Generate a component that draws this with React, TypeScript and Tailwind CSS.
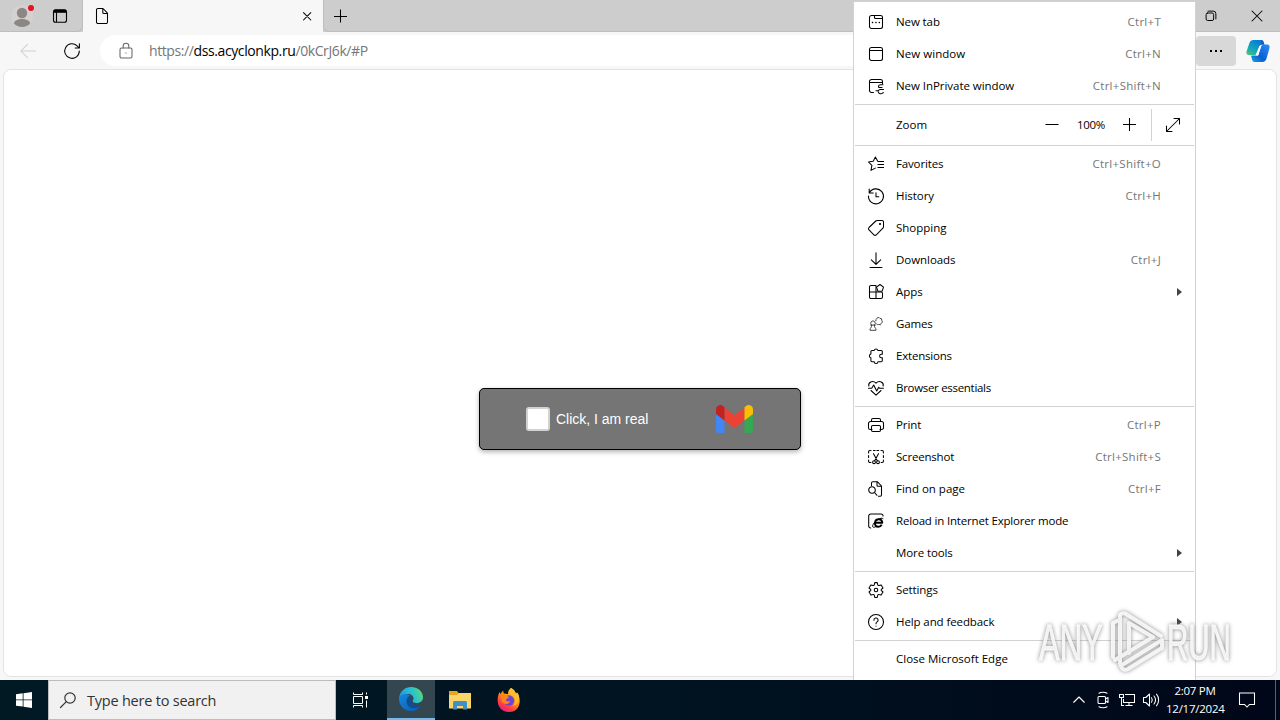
import React from 'react';

type MenuRow = {
  label: string;
  keys?: string;
  icon?: React.ReactNode;
  arrow?: boolean;
  tracking?: string;
};

function Icon({ children, className = 'w-4 h-4' }: { children: React.ReactNode; className?: string }) {
  return (
    <svg
      viewBox="0 0 16 16"
      className={`shrink-0 overflow-visible ${className}`}
      fill="none"
      stroke="currentColor"
      strokeWidth="1.05"
      strokeLinecap="round"
      strokeLinejoin="round"
    >
      {children}
    </svg>
  );
}

const windowRows: MenuRow[] = [
  {
    label: 'New tab',
    keys: 'Ctrl+T',
    tracking: 'tracking-[-0.1px]',
    icon: (
      <Icon>
        <rect x="1.5" y="1.5" width="13" height="13" rx="2" />
        <path d="M6.5 1.5v2a1 1 0 0 0 1 1h7" />
        <path d="M4.5 8.5h.1M7.9 8.5h.1M11.3 8.5h.1" strokeWidth="1.5" />
      </Icon>
    ),
  },
  {
    label: 'New window',
    keys: 'Ctrl+N',
    tracking: 'tracking-[0.05px]',
    icon: (
      <Icon>
        <rect x="1.5" y="1.5" width="13" height="13" rx="2" />
        <path d="M1.5 4.5h13" />
      </Icon>
    ),
  },
  {
    label: 'New InPrivate window',
    keys: 'Ctrl+Shift+N',
    tracking: 'tracking-[-0.05px]',
    icon: (
      <Icon>
        <path d="M5.5 14.5h-2a2 2 0 0 1-2-2v-9a2 2 0 0 1 2-2h9a2 2 0 0 1 2 2v2M1.5 4.5h13" />
        <path d="M15 6.8h-2.5a2 2 0 0 0-2 2M10.8 9.5H14M15.500 11.500h-3.300a1.800 1.800 0 0 0-1.800 1.300H8M10.200 13.800a2.600 2.600 0 0 0 4.600.900h.700" />
      </Icon>
    ),
  },
];

const browseRows: MenuRow[] = [
  {
    label: 'Favorites',
    keys: 'Ctrl+Shift+O',
    tracking: 'tracking-[-0.15px]',
    icon: (
      <Icon>
        <path d="M9.700 5.300 7.400 1 5.200 5.300.5 6l3.400 3.400-.9 5 4.300-2.300" />
        <path d="M10 5.500h6M9.500 8.500H16M9.500 11.500H16" strokeLinecap="butt" />
      </Icon>
    ),
  },
  {
    label: 'History',
    keys: 'Ctrl+H',
    tracking: 'tracking-[-0.05px]',
    icon: (
      <Icon>
        <path d="M1.200 1v4h4M1.500 4.600A7.500 7.500 0 1 1 .5 8M8 4.700v4h2.800" />
      </Icon>
    ),
  },
  {
    label: 'Shopping',
    tracking: 'tracking-[0px]',
    icon: (
      <Icon>
        <path d="M9.200.5h4.700a1.600 1.600 0 0 1 1.600 1.600v4.700a2 2 0 0 1-.6 1.400l-6.600 6.600a1.700 1.700 0 0 1-2.400 0L1 9.900a1.700 1.700 0 0 1 0-2.400L7.800 1A2 2 0 0 1 9.200.5Z" />
        <circle cx="12" cy="4" r=".5" fill="currentColor" />
      </Icon>
    ),
  },
  {
    label: 'Downloads',
    keys: 'Ctrl+J',
    tracking: 'tracking-[-0.05px]',
    icon: (
      <Icon>
        <path d="M8 .8v11.400M3.300 7.800 8 12.400l4.700-4.600M2 15.500h12" />
      </Icon>
    ),
  },
  {
    label: 'Apps',
    arrow: true,
    tracking: 'tracking-[0px]',
    icon: (
      <Icon>
        <path d="M8 14.500H3A1.500 1.500 0 0 1 1.500 13V3A1.500 1.500 0 0 1 3 1.500h5v13ZM1.500 8H13a1.500 1.500 0 0 1 1.500 1.500V13a1.500 1.500 0 0 1-1.500 1.500H8" />
        <path d="m12 .5 3.500 2.700-1.300 4H9.900L8.500 3.200Z" fill="white" />
      </Icon>
    ),
  },
  {
    label: 'Games',
    tracking: 'tracking-[-0.15px]',
    icon: (
      <Icon>
        <g strokeWidth="0.9" stroke="#333">
          <path d="M3.500 9a2.300 2.300 0 1 1 3 0M2.700 9.100h4.600M3.600 9.300c0 1.800-.6 2.700-1.600 3.500v1.500h6v-1.500c-1-.8-1.600-1.700-1.600-3.500" />
          <path d="M7.800 4.900a1.700 1.700 0 0 1 1-2.200 1.600 1.600 0 0 1 3-.4 1.900 1.900 0 0 1 2 2.200 1.700 1.700 0 0 1-.5 2.700 1.900 1.900 0 0 1-2.700 1.300A1.700 1.700 0 0 1 8.500 8" />
        </g>
      </Icon>
    ),
  },
  {
    label: 'Extensions',
    tracking: 'tracking-[-0.2px]',
    icon: (
      <Icon>
        <path d="M4 2.500h2.200a1.900 1.900 0 0 1 3.700 0h3.300a1.100 1.100 0 0 1 1.100 1.100v2.600h-.9a1.800 1.800 0 0 0 0 3.600h.9v2.800a1.100 1.100 0 0 1-1.100 1.100H10a1.900 1.900 0 0 1-3.800 0H4a1.100 1.100 0 0 1-1.100-1.100V9.800a1.900 1.900 0 0 1 0-3.700V3.600A1.100 1.100 0 0 1 4 2.500Z" />
      </Icon>
    ),
  },
  {
    label: 'Browser essentials',
    tracking: 'tracking-[-0.3px]',
    icon: (
      <Icon>
        <path d="M.9 6C-.2 2.500 4.500-.3 8 3.100c3.500-3.400 8.200-.6 7.100 2.900M3 10.500l5 4.700 5-4.700" />
        <path d="M.5 8.300h3.200l2-3.300 3 6 2-3.800.8 1.100h4" />
      </Icon>
    ),
  },
];

const pageRows: MenuRow[] = [
  {
    label: 'Print',
    keys: 'Ctrl+P',
    tracking: 'tracking-[-0.05px]',
    icon: (
      <Icon>
        <path d="M4 12.500H2.300A1.800 1.800 0 0 1 .5 10.700V6.500A2 2 0 0 1 2.500 4.500h11a2 2 0 0 1 2 2v4.200a1.800 1.800 0 0 1-1.800 1.800H12M3.500 4.500V3A1.500 1.500 0 0 1 5 1.500h6A1.500 1.500 0 0 1 12.500 3v1.500" />
        <rect x="3.500" y="8.500" width="9" height="6" rx="1.200" />
      </Icon>
    ),
  },
  {
    label: 'Screenshot',
    keys: 'Ctrl+Shift+S',
    tracking: 'tracking-[-0.2px]',
    icon: (
      <Icon>
        <path d="M.6 4V2.800a1.300 1.300 0 0 1 1.300-1.300H3M5.500 1.500h1.700M9 1.500h1.700M13 1.500h1.100a1.300 1.300 0 0 1 1.300 1.300V4M.6 6.500v2M15.400 6.500v2M.6 11v1.200a1.300 1.300 0 0 0 1.300 1.300h1M15.400 11v1.200a1.300 1.300 0 0 1-1.300 1.300h-1" />
        <path d="m5.500 4.800 3.800 7M10.500 4.800l-3.800 7" />
        <circle cx="6" cy="13.200" r="1.400" />
        <circle cx="10" cy="13.200" r="1.400" />
      </Icon>
    ),
  },
  {
    label: 'Find on page',
    keys: 'Ctrl+F',
    tracking: 'tracking-[0px]',
    icon: (
      <Icon>
        <path d="M3.500 4.500V2A1.300 1.300 0 0 1 4.800.7h4.500l4.200 4.300v9a1.300 1.300 0 0 1-1.300 1.300H10.500M9 .8v3.400a1 1 0 0 0 1 1h3.400" />
        <circle cx="4" cy="9" r="3.300" />
        <path d="m6.500 11.500 2.500 2.800" />
      </Icon>
    ),
  },
  {
    label: 'Reload in Internet Explorer mode',
    tracking: 'tracking-[-0.18px]',
    icon: (
      <Icon>
        <path d="M2.700 15a2 2 0 0 1-2-2V3a2 2 0 0 1 2-2h10.600a2 2 0 0 1 1.800 2" />
        <path d="M13.700 11.600c-.7 1.400-1.900 2.100-3.400 2.100-2.400 0-3.600-1.700-3.300-4h7.300c0-2.300-1.300-3.500-3.600-3.500-1.900 0-3.200 1-3.700 2.700" strokeWidth="1.900" strokeLinecap="butt" />
        <path d="M15 5.500c-1.800-1.500-8 1.700-10 6.200-1.200 2.800.5 3.200 2.700 2" strokeWidth="1" />
      </Icon>
    ),
  },
  { label: 'More tools', arrow: true, tracking: 'tracking-[-0.1px]' },
];

const settingsRows: MenuRow[] = [
  {
    label: 'Settings',
    tracking: 'tracking-[-0.1px]',
    icon: (
      <Icon>
        <path d="M6.800.600 6.300 2.700a1 1 0 0 1-1.300.8l-2.100-.6L1 6l1.600 1.400a.8.800 0 0 1 0 1.200L1 10l1.900 3.100 2.100-.6a1 1 0 0 1 1.300.8l.5 2.100h2.400l.5-2.100a1 1 0 0 1 1.300-.8l2.100.6L15 10l-1.600-1.400a.8.800 0 0 1 0-1.200L15 6l-1.900-3.100-2.100.6a1 1 0 0 1-1.300-.8L9.200.600Z" />
        <circle cx="8" cy="8" r="1.800" />
      </Icon>
    ),
  },
  {
    label: 'Help and feedback',
    arrow: true,
    tracking: 'tracking-[-0.1px]',
    icon: (
      <Icon>
        <circle cx="8" cy="8" r="7.500" />
        <path d="M5.900 6.200a2.100 2.100 0 1 1 3.200 1.700C8.300 8.400 8 8.800 8 9.700M8 12v.1" />
      </Icon>
    ),
  },
];

function Row({ row }: { row: MenuRow }) {
  return (
    <div className="flex h-8 items-center pl-[14px] pr-[13px]">
      <span className="flex w-4 shrink-0">{row.icon}</span>
      <span className={`ml-3 flex-1 whitespace-nowrap text-black ${row.tracking ?? 'tracking-[0px]'}`}>{row.label}</span>
      {row.keys && <span className="mr-[21px] tracking-[0.27px] text-[#767676]">{row.keys}</span>}
      {row.arrow && (
        <svg viewBox="0 0 5 8" className="h-2 w-[5px]" fill="#444">
          <path d="M0 0 5 4 0 8Z" />
        </svg>
      )}
    </div>
  );
}

function Rows({ rows }: { rows: MenuRow[] }) {
  return (
    <>
      {rows.map((row) => (
        <Row key={row.label} row={row} />
      ))}
    </>
  );
}

function Separator({ className = 'mt-[2px] mb-[2px]' }: { className?: string }) {
  return <div className={`mx-px h-px shrink-0 bg-[#d2d2d2] ${className}`} />;
}

function EdgeMenu() {
  return (
    <div className="absolute left-[853px] top-px flex h-[679px] w-[343px] flex-col border border-b-0 border-[#d2d2d2] bg-white pt-1 text-[11.5px]">
      <Rows rows={windowRows} />
      <Separator className="mt-[2px] mb-1" />
      <div className="flex h-8 shrink-0 items-center pl-[42px] text-black">
        <span className="flex-1">Zoom</span>
        <Icon className="mr-[17px] h-4 w-4">
          <path d="M1.500 7.500h13" strokeLinecap="butt" />
        </Icon>
        <span className="mr-[17px] w-7 whitespace-nowrap text-center tracking-[-0.3px]">100%</span>
        <Icon className="mr-[13px] h-4 w-4">
          <path d="M1 7.500h13M7.500 1v13" strokeLinecap="butt" />
        </Icon>
        <span className="h-8 w-px bg-[#d2d2d2]" />
        <Icon className="ml-[13px] mr-[14px] h-4 w-4">
          <path d="M9 1.500h5.500V7M14.500 1.500l-13 13M1.500 9v5.500H7" />
        </Icon>
      </div>
      <Separator className="mt-1 mb-[2px]" />
      <Rows rows={browseRows} />
      <Separator />
      <Rows rows={pageRows} />
      <Separator />
      <Rows rows={settingsRows} />
      <Separator />
      <Row row={{ label: 'Close Microsoft Edge' }} />
    </div>
  );
}

function CopilotLogo() {
  return (
    <svg viewBox="0 0 24 24" className="h-6 w-6">
      <defs>
        <linearGradient id="copA" x1="0" y1="1" x2="0.6" y2="0">
          <stop offset="0" stopColor="#53c66e" />
          <stop offset="0.45" stopColor="#16a8b8" />
          <stop offset="1" stopColor="#087fd5" />
        </linearGradient>
        <linearGradient id="copB" x1="0" y1="1" x2="1" y2="0">
          <stop offset="0" stopColor="#1aa5dd" />
          <stop offset="0.4" stopColor="#0b5fd0" />
          <stop offset="1" stopColor="#2c8cff" />
        </linearGradient>
      </defs>
      <path d="M11.500 1h4c1.400 0 1.800.8 2.200 2l.8 2.700h-3.500L11 9Z" fill="#1557bd" />
      <path d="M7.500 1h6c1.400 0 2 .8 1.600 2.200L11.500 14c-.6 1.500-1.600 2-2.900 2H3C.8 16 0 14.500.5 12.500l3-8.800C4.200 1.800 5.500 1 7.500 1Z" fill="url(#copA)" />
      <path d="M16.500 23h-8c-1.400 0-1.900-.8-2.300-2L5 16.500h5.300c1.200 0 1.700.5 2.200-1.100l2.800-8.100c.5-1.300 1.200-1.800 2.600-1.800H21c2.200 0 3 1.500 2.500 3.600l-3 10.400c-.6 2.300-2 3.500-4 3.500Z" fill="url(#copB)" />
      <path d="M15.200 6.800h-1.700l-4 9.500 2.600.200Z" fill="white" />
    </svg>
  );
}

function GmailLogo() {
  return (
    <svg viewBox="0 0 37 28" className="h-7 w-[37px]">
      <path d="M0 9 8.500 15.500V28H2.500A2.500 2.500 0 0 1 0 25.500Z" fill="#4285f4" />
      <path d="M28.500 15.500 37 9v16.500a2.500 2.500 0 0 1-2.500 2.500h-6Z" fill="#34a853" />
      <path d="M8.500 2.300 18.500 10.500 28.500 2.300v13.200l-10 7.500-10-7.500Z" fill="#ea4335" />
      <path d="M0 4.200C0 .7 4-1.200 6.700.8L8.500 2.300v13.200L0 9Z" fill="#c5221f" />
      <path d="M37 4.200c0-3.500-4-5.400-6.700-3.400l-1.800 1.500v13.200L37 9Z" fill="#fbbc04" />
    </svg>
  );
}

function TabStrip() {
  return (
    <div className="flex h-8 shrink-0 bg-[#cdcdcd]">
      <div className="flex w-[83px] items-center rounded-br-md border-b border-r border-[#bdbdbd] pl-3">
        <svg viewBox="0 0 24 24" className="h-6 w-6">
          <circle cx="10" cy="12" r="11" fill="#d4d1cf" />
          <circle cx="10" cy="9" r="5.2" fill="#8b8785" />
          <path d="M2 19.500c0-6 16-6 16 0-3.500 4.500-12.500 4.500-16 0Z" fill="#8b8785" />
          <circle cx="19" cy="4" r="3" fill="#e81123" />
        </svg>
        <svg viewBox="0 0 16 16" className="ml-4 h-4 w-4" fill="none" stroke="black" strokeWidth="1.1">
          <rect x="1.500" y="1.800" width="13" height="12.500" rx="2" />
          <path d="M2 3.300h12" strokeWidth="3" />
          <path d="M4.500 4v10" />
        </svg>
      </div>
      <div className="flex w-[240px] items-center bg-[#f7f7f7] pl-[11px] pr-2">
        <Icon className="h-4 w-4">
          <path d="M4 .5h5l4.500 4.700v8.800a1.500 1.500 0 0 1-1.500 1.500H4A1.500 1.500 0 0 1 2.500 14V2A1.500 1.500 0 0 1 4 .5ZM8.800.8v3.700a1 1 0 0 0 1 1h3.500" />
        </Icon>
        <Icon className="ml-auto h-4 w-4">
          <path d="m4.500 4.700 7.300 7.300M11.800 4.700 4.500 12" />
        </Icon>
      </div>
      <div className="flex flex-1 items-center rounded-bl-md border-b border-l border-[#bdbdbd]">
        <Icon className="ml-2 h-4 w-4">
          <path d="M8.500 1.500v13M2 8.500h13" strokeLinecap="butt" />
        </Icon>
        <Icon className="ml-auto h-3 w-3">
          <rect x="1.500" y="4" width="10" height="10" rx="2" strokeWidth="1.300" />
          <path d="M4 1.500h7A3.500 3.500 0 0 1 14.500 5v7" strokeWidth="1.300" />
        </Icon>
        <Icon className="ml-8 mr-[15px] h-4 w-4">
          <path d="m3 3 10 10M13 3 3 13" />
        </Icon>
      </div>
    </div>
  );
}

function Toolbar() {
  return (
    <div className="flex h-[37px] shrink-0 items-center bg-[#f7f7f7]">
      <Icon className="ml-5 h-4 w-4 text-[#cfcfcf]">
        <path d="M15.500 8H.8M7.500 1.300.8 8l6.700 6.700" />
      </Icon>
      <Icon className="ml-7 h-4 w-4 text-black">
        <path d="M15.300 8a7.300 7.300 0 1 1-2.200-5.200l2.200 2.200M15.400.8V5h-4.200" />
      </Icon>
      <div className="ml-5 flex h-[31px] flex-1 items-center rounded-l-full bg-white pl-[18px]">
        <Icon className="h-4 w-4 text-[#666]">
          <rect x="2" y="5" width="12" height="10" rx="1.500" />
          <path d="M5.200 5V3a2.800 2.800 0 0 1 5.600 0v2M8 9.800v.3" />
        </Icon>
        <span className="ml-[15px] whitespace-nowrap text-[14px] tracking-[-0.4px] text-[#767676]">
          https://<span className="text-black">dss.acyclonkp.ru</span>/0kCrJ6k/#P
        </span>
      </div>
      <div className="flex h-[30px] w-10 items-center justify-center gap-[3px] rounded bg-[#d8d8d8]">
        <span className="h-[2px] w-[2px] bg-black" />
        <span className="h-[2px] w-[2px] bg-black" />
        <span className="h-[2px] w-[2px] bg-black" />
      </div>
      <div className="ml-[10px] mr-[10px]">
        <CopilotLogo />
      </div>
    </div>
  );
}

function EdgeLogo() {
  return (
    <svg viewBox="0 0 24 24" className="h-6 w-6">
      <defs>
        <linearGradient id="edgeTop" x1="0" y1="0.6" x2="1" y2="0.3">
          <stop offset="0" stopColor="#2196df" />
          <stop offset="0.55" stopColor="#27bfd6" />
          <stop offset="1" stopColor="#5cdb70" />
        </linearGradient>
        <linearGradient id="edgeLow" x1="0" y1="0" x2="1" y2="1">
          <stop offset="0" stopColor="#1788df" />
          <stop offset="1" stopColor="#075cae" />
        </linearGradient>
      </defs>
      <path d="M0 12C1-4 23-3 24 10c.3 4-3 6-6.500 6-3 0-4.500-1-3.500-2.700 2-3.300-2-7.300-6.500-6C3.500 8 1 10 0 12Z" fill="url(#edgeTop)" />
      <path d="M0 12C.5 6.500 8.500 5.500 11.500 9c-4 1-5 6-2.500 9.500s8 3.500 12.500.3C19 23 15 24.500 11 24 4.500 23.500 0 18 0 12Z" fill="url(#edgeLow)" />
      <path d="M10.800 9c-4 1.500-4 7-1 10 3.500 3.200 8.500 2.500 12.200-.7-5 1.500-9.500-1.300-9.500-5Z" fill="#124c91" />
    </svg>
  );
}

function FolderLogo() {
  return (
    <svg viewBox="0 0 22 20" className="h-5 w-[22px]">
      <path d="M0 1h8l1.500 2H21a1 1 0 0 1 1 1v14H0Z" fill="#e9a520" />
      <path d="M0 5h8l2-2h12v15.500H0Z" fill="#fbd568" />
      <path d="M4 19.500v-7a1.500 1.500 0 0 1 1.500-1.500h11a1.500 1.500 0 0 1 1.500 1.500v7h-4V16H8v3.500Z" fill="#3f8fc9" />
    </svg>
  );
}

function FirefoxLogo() {
  return (
    <svg viewBox="0 0 24 24" className="h-6 w-6">
      <defs>
        <linearGradient id="fox" x1="0.8" y1="0" x2="0.2" y2="1">
          <stop offset="0" stopColor="#fff04a" />
          <stop offset="0.4" stopColor="#ff980e" />
          <stop offset="0.75" stopColor="#ff3b47" />
          <stop offset="1" stopColor="#e31587" />
        </linearGradient>
      </defs>
      <path d="M14 0c3 1.500 4.500 4 5 6l1-1.500C25 11 23.500 24 12 24 .5 24-1.500 12 2.500 4l1 2L6 2.500l.8 3L11 6c0-2.500 1-4.700 3-6Z" fill="url(#fox)" />
      <circle cx="12" cy="12.500" r="5.200" fill="#7045d6" />
      <path d="M4 8c3-2 6-.5 8 1 0 1.300-2.500 1-3 2.500s2 2.500 4 1.500c0 3-5 4.500-8 1Z" fill="#ff8418" />
      <path d="M14 0c-2.500 3-1.500 6 1.500 7.500C19 10 19 15 16 18c6-1 8-9 4-13.500L19 6c-.5-2-2-4.500-5-6Z" fill="#ffbd2d" />
    </svg>
  );
}

function Taskbar() {
  return (
    <div className="flex h-10 shrink-0 items-center bg-linear-to-r from-[#001923] via-[#001421] to-[#000718] text-white">
      <div className="flex w-12 justify-center">
        <svg viewBox="0 0 16 16" className="h-4 w-4" fill="white">
          <path d="M0 2.300 6.700 1.300V7.500H0ZM7.500 1.200 16 0v7.500H7.500ZM0 8.300h6.700v6.300L0 13.700ZM7.500 8.300H16V16l-8.500-1.300Z" />
        </svg>
      </div>
      <div className="flex h-10 w-72 items-center border border-[#bdbdbd] bg-[#f1f1f1] text-[#333]">
        <Icon className="ml-[11px] h-4 w-4">
          <circle cx="10" cy="6" r="5.200" strokeWidth="1.200" />
          <path d="M6.300 9.700.5 15.500" strokeWidth="1.200" />
        </Icon>
        <span className="ml-[11px] whitespace-nowrap pt-px text-[14.5px] tracking-[-0.22px]">Type here to search</span>
      </div>
      <div className="flex w-[51px] justify-center pr-1">
        <svg viewBox="0 0 16 16" className="h-4 w-4" fill="none" stroke="white">
          <path d="M1.500.5v2h9v-2M1.500 15.500v-2h9v2M1.500 4.500h9v7h-9ZM14.500.5v2M14.500 8.500v7" />
          <path d="M13 5.500h3" strokeWidth="3" />
        </svg>
      </div>
      <div className="flex h-10 w-12 items-center justify-center border-b-2 border-[#76b9ed] bg-[#344750]">
        <EdgeLogo />
      </div>
      <div className="flex w-[49px] justify-center">
        <FolderLogo />
      </div>
      <div className="ml-px flex w-12 justify-center">
        <FirefoxLogo />
      </div>
      <div className="ml-auto flex items-center">
        <Icon className="h-3 w-3">
          <path d="m1 11 7-7 7 7" strokeWidth="1.500" />
        </Icon>
        <Icon className="ml-[10px] h-4 w-4">
          <rect x="3" y="4.500" width="7.500" height="7" rx="1" />
          <path d="m10.500 7 2.500-1.500v5L10.500 9M4 1.200c2-1.300 6-1.300 8 0M4 14.800c2 1.300 6 1.300 8 0" />
        </Icon>
        <Icon className="ml-2 h-4 w-4">
          <path d="M.5 2.500h4v3h-4ZM2.500 5.500v8H5M6 2.500h9.500v8H4.500V7M10 10.500v3M6.500 13.500h7" strokeLinecap="butt" />
        </Icon>
        <Icon className="ml-2 h-4 w-4">
          <path d="M.5 5.500h2.300L6.500 2v12l-3.700-3.500H.5ZM8.500 5.700a4 4 0 0 1 0 4.600M11 4a6.500 6.500 0 0 1 0 8M13.500 2.200a9 9 0 0 1 0 11.600" />
        </Icon>
        <div className="ml-[7px] w-[58px] whitespace-nowrap text-center text-[11.5px] leading-[18px] tracking-[-0.25px]">
          <div>2:07 PM</div>
          <div>12/17/2024</div>
        </div>
        <Icon className="ml-[15px] mr-5 h-4 w-4">
          <path d="M.5 1h15v11.500h-5L8 15l-2.500-2.500h-5Z" strokeLinejoin="miter" />
        </Icon>
        <div className="mr-1 h-10 w-px bg-[#59616b]" />
      </div>
    </div>
  );
}

function Watermark() {
  return (
    <svg
      viewBox="0 0 200 70"
      className="absolute left-[1036px] top-[606px] h-[70px] w-[200px] overflow-visible drop-shadow-[0_0_2px_#777]"
      fill="white"
      fillOpacity="0.85"
    >
      <g fontFamily="'Liberation Sans', sans-serif" fontSize="50" stroke="white" strokeWidth="0.8" strokeOpacity="0.85">
        <text transform="translate(3 54) scale(0.62 1)">ANY</text>
        <text transform="translate(131 54) scale(0.59 1)">RUN</text>
      </g>
      <g fill="none" stroke="white" strokeOpacity="0.85" strokeLinejoin="round" strokeLinecap="round">
        <path d="M84 57V9q3-3 6-1l35 22M93 47V17l24 14-38 23M77 51V17l6-3M84 57q2 9 8 6l34-21v-8L86 59" strokeWidth="4" />
      </g>
    </svg>
  );
}

export default function App() {
  return (
    <div className="relative flex h-[720px] w-[1280px] flex-col overflow-hidden bg-[#f7f7f7] font-['Open_Sans','Noto_Sans',sans-serif]">
      <TabStrip />
      <Toolbar />
      <div className="mx-[3px] mb-[3px] flex flex-1 items-center justify-center rounded-lg border border-[#e3e3e3] bg-white pt-[91px]">
        <div className="flex h-[62px] w-[322px] items-center rounded-[5px] border border-black bg-[#757575] pl-[46px] shadow-[0_2px_5px_rgba(0,0,0,0.3)]">
          <span className="h-6 w-6 rounded-[3px] border-2 border-[#d2d2d2] bg-white" />
          <span className="ml-[6px] w-[92px] whitespace-nowrap pt-px font-['Liberation_Sans',sans-serif] text-[14px] tracking-[-0.02px] text-white">
            Click, I am real
          </span>
          <span className="ml-[68px]">
            <GmailLogo />
          </span>
        </div>
      </div>
      <Taskbar />
      <EdgeMenu />
      <Watermark />
    </div>
  );
}
